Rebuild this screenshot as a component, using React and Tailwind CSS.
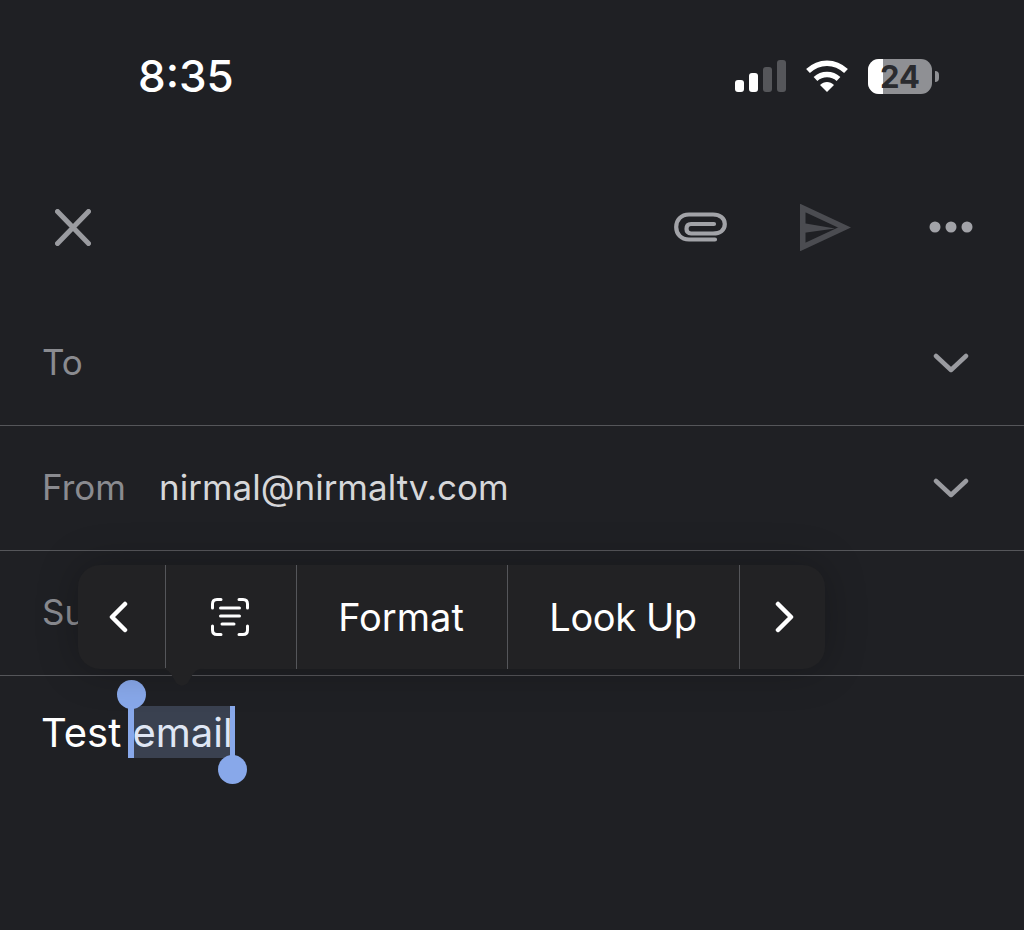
import React from "react";

function Chevron() {
  return (
    <svg width="36" height="22" viewBox="0 0 36 22" fill="none" stroke="#9a9ba0" strokeWidth="4.5" strokeLinecap="round" strokeLinejoin="round">
      <path d="M3 4 L18 18 L33 4" />
    </svg>
  );
}

function Row({ label, children }) {
  return (
    <div className="flex h-[125px] items-center justify-between border-b border-[#55565a] pl-[42px] pr-[55px]">
      <div className="flex items-center pb-[2px]">
        <span className="w-[117px] text-[35px] text-[#8a8b90]">{label}</span>
        {children}
      </div>
      <Chevron />
    </div>
  );
}

export default function App() {
  return (
    <div className="relative h-[930px] w-[1024px] overflow-hidden bg-[#1f2024] font-['Inter',sans-serif] text-white">
      {/* status bar */}
      <div className="flex h-[150px] items-center justify-between pt-[2px] pl-[138px] pr-[85px]">
        <span className="text-[44px] font-medium leading-none">8:35</span>
        <div className="flex items-center gap-[19px]">
          <svg width="52" height="34" viewBox="0 0 52 34">
            <rect x="1" y="21" width="9" height="12" rx="3" fill="#fff" />
            <rect x="15" y="14" width="9" height="19" rx="3" fill="#fff" />
            <rect x="29" y="8" width="9" height="25" rx="3" fill="#55565a" />
            <rect x="43" y="1" width="9" height="32" rx="3" fill="#55565a" />
          </svg>
          <svg width="44" height="34" viewBox="0 0 44 34" fill="none" stroke="#fff" strokeWidth="5.5">
            <path d="M3 12 C14 1.5 30 1.5 41 12" />
            <path d="M10.5 20 C17 14 27 14 33.5 20" />
            <path d="M15 26 L22 33 L29 26 C25 22 19 22 15 26 Z" fill="#fff" stroke="none" />
          </svg>
          <div className="flex items-center gap-[3px]">
            <div className="relative flex h-[35px] w-[64px] items-center justify-center overflow-hidden rounded-[11px] bg-[#8f9094]">
              <div className="absolute inset-y-0 left-0 w-[15px] bg-white" />
              <span className="relative text-[31px] font-bold leading-none text-[#2a2b2f]">24</span>
            </div>
            <div className="h-[11px] w-[4px] rounded-r-full bg-[#8f9094]" />
          </div>
        </div>
      </div>

      {/* toolbar */}
      <div className="flex h-[151px] items-center justify-between pt-[3px] pl-[55px] pr-[51px]">
        <svg width="36" height="37" viewBox="0 0 36 37" stroke="#9a9ba0" strokeWidth="5" strokeLinecap="round">
          <path d="M2.500 2.500 L33.500 34.500 M33.500 2.500 L2.500 34.500" />
        </svg>
        <div className="flex items-center">
          <svg className="mr-[73px]" width="53" height="30" viewBox="0 0 53 30" fill="none" stroke="#a2a3a8" strokeWidth="4.200" strokeLinecap="round">
            <path d="M41 27.500 H15 C7 27.500 2.200 22 2.200 15 C2.200 8 7 2.500 15 2.500 H39 C46 2.500 50.800 6.500 50.800 12 C50.800 18 46 21.500 39 21.500 H17 C14 21.500 12.500 19.500 12.500 17 C12.500 14 14 12 17 12 H40" />
          </svg>
          <svg className="mr-[78px]" width="51" height="47" viewBox="0 0 51 47" fill="none" stroke="#4b4c51" strokeWidth="5.500" strokeLinejoin="miter">
            <path d="M2.750 4 L44.500 23.500 L2.750 43 Z" />
            <path d="M2.750 19 L35 24.500 L2.750 29 Z" fill="#4b4c51" stroke="none" />
          </svg>
          <svg width="44" height="14" viewBox="0 0 44 14" fill="#a2a3a8">
            <circle cx="6" cy="7" r="5.500" />
            <circle cx="22" cy="7" r="5.500" />
            <circle cx="38" cy="7" r="5.500" />
          </svg>
        </div>
      </div>

      {/* fields */}
      <Row label="To" />
      <Row label="From">
        <span className="text-[35px] text-[#d6d7da]">nirmal@nirmaltv.com</span>
      </Row>
      <div className="flex h-[125px] items-center border-b border-[#55565a] pl-[42px] pb-[2px]">
        <span className="text-[35px] text-[#8a8b90]">Subject</span>
      </div>

      {/* body */}
      <div className="flex h-[116px] items-start pl-[41px] pt-[30px] text-[40px]">
        <span className="h-[52px] whitespace-pre leading-[54px]">Test </span>
        <span className="h-[52px] bg-[#3a4150] pr-[2px] leading-[54px] text-[#dfe6f4]">email</span>
      </div>

      {/* selection handles */}
      <div className="absolute left-[128px] top-[700px] h-[58px] w-[6px] bg-[#88a8ea]" />
      <div className="absolute left-[117px] top-[680px] h-[29px] w-[29px] rounded-full bg-[#88a8ea]" />
      <div className="absolute left-[230px] top-[706px] h-[60px] w-[5px] bg-[#88a8ea]" />
      <div className="absolute left-[218px] top-[755px] h-[29px] w-[29px] rounded-full bg-[#88a8ea]" />

      {/* edit menu */}
      <div className="absolute left-[78px] top-[565px] flex h-[104px] w-[747px] items-stretch rounded-[22px] bg-[#222224] shadow-[0_0_40px_rgba(0,0,0,0.25)]">
        <div className="flex w-[87px] items-center justify-center pr-[6px]">
          <svg width="22" height="32" viewBox="0 0 22 32" fill="none" stroke="#fff" strokeWidth="4.5" strokeLinecap="round" strokeLinejoin="round">
            <path d="M17 3 L4 16 L17 29" />
          </svg>
        </div>
        <div className="flex w-[131px] items-center justify-center border-l border-[#55565a] pr-[2px]">
          <svg width="38" height="38" viewBox="0 0 38 38" fill="none" stroke="#fff" strokeWidth="3" strokeLinecap="round">
            <path d="M1.500 10 V6 C1.500 3 3 1.500 6 1.500 H10 M28 1.500 H32 C35 1.500 36.500 3 36.500 6 V10 M36.500 28 V32 C36.500 35 35 36.500 32 36.500 H28 M10 36.500 H6 C3 36.500 1.500 35 1.500 32 V28" />
            <path d="M9.500 10 H28.500 M9.500 18 H28.500 M11 26 H23" />
          </svg>
        </div>
        <div className="flex w-[211px] items-center justify-center border-l border-[#55565a] pr-[2px] text-[38px]">Format</div>
        <div className="flex w-[232px] items-center justify-center border-l border-[#55565a] pr-[1px] text-[38px] tracking-[-0.4px]">Look Up</div>
        <div className="flex flex-1 items-center justify-center border-l border-[#55565a] pl-[2px]">
          <svg width="22" height="32" viewBox="0 0 22 32" fill="none" stroke="#fff" strokeWidth="4.5" strokeLinecap="round" strokeLinejoin="round">
            <path d="M5 3 L18 16 L5 29" />
          </svg>
        </div>
      </div>
      <svg className="absolute left-[160px] top-[668px]" width="44" height="22" viewBox="0 0 44 22" fill="#222224">
        <path d="M0 0 H44 C36 1 34 4 30 11 C26 20 18 20 14 11 C10 4 8 1 0 0 Z" />
      </svg>
    </div>
  );
}
